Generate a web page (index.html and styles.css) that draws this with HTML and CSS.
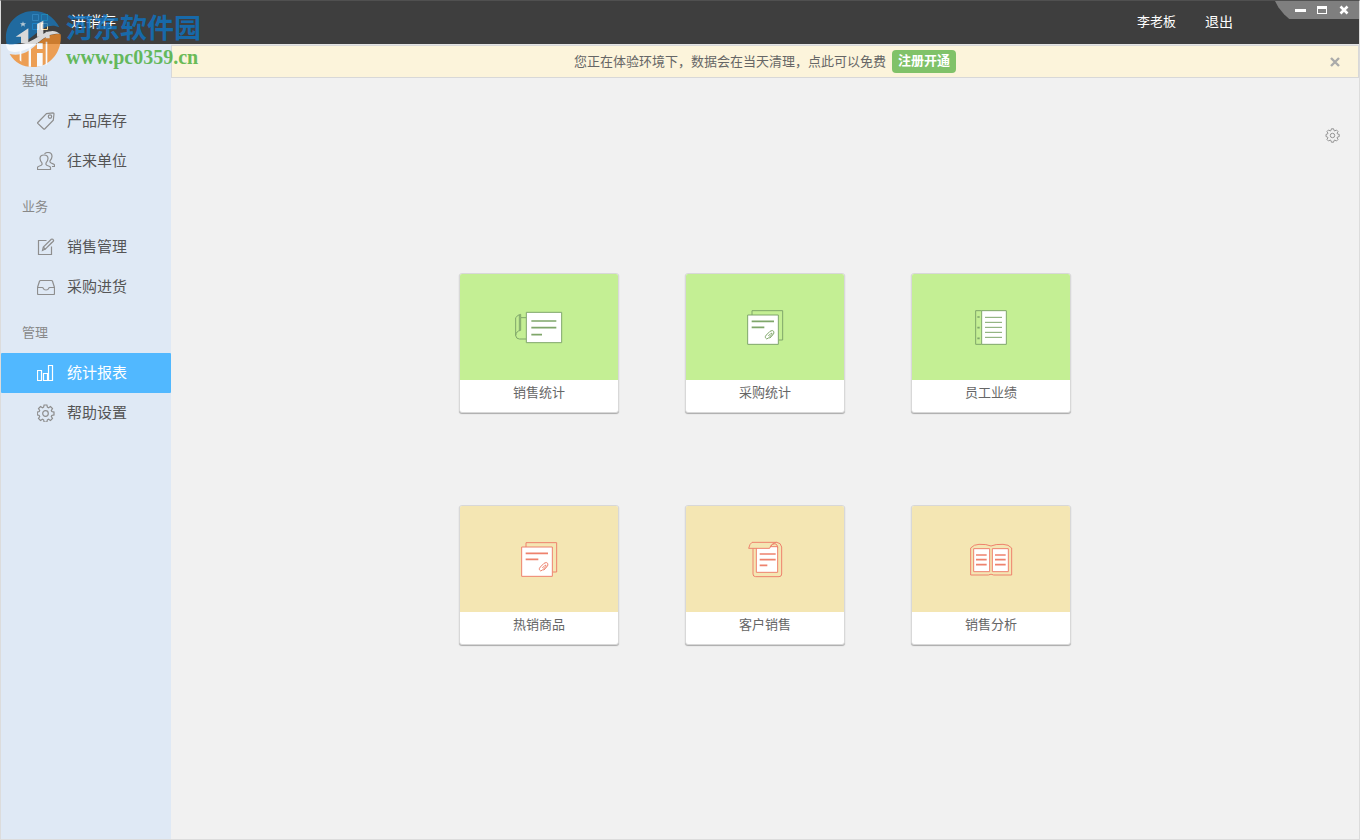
FILE: index.html
```html
<!DOCTYPE html>
<html lang="zh-CN">
<head>
<meta charset="utf-8">
<title>进销存</title>
<link rel="stylesheet" href="styles.css">
</head>
<body>
<div class="window">
  <header class="topbar">
    <svg class="app-icon" viewBox="0 0 16 16" width="16" height="16" fill="none" aria-hidden="true">
      <path d="M.5.5h6v6h-6z" stroke="#8fb4cc"/><path d="M9.500.5h6v6h-6z" stroke="#3ac0b0"/>
      <path d="M.5 9.500h6v6h-6z" stroke="#2fb3ff"/><path d="M9.500 9.500h6v6h-6z" stroke="#ffd98e"/>
    </svg>
    <h1 class="app-title">进销存</h1>
    <a class="user" href="#">李老板</a>
    <a class="logout" href="#">退出</a>
    <div class="win-controls">
      <button type="button" aria-label="最小化"><svg viewBox="0 0 12 12" width="12" height="12"><path d="M1 5h11v3H1z" fill="#fff"/></svg></button>
      <button type="button" aria-label="最大化"><svg viewBox="0 0 12 12" width="12" height="12"><path d="M1 2h10v8H1zM2 5v4h8V5z" fill="#fff" fill-rule="evenodd"/></svg></button>
      <button type="button" aria-label="关闭"><svg viewBox="0 0 12 12" width="12" height="12"><path d="M2.500 2.500l7 7M9.500 2.500l-7 7" stroke="#fff" stroke-width="2.600"/></svg></button>
    </div>
  </header>

  <div class="body">
    <nav class="sidebar">
      <h2 class="group">基础</h2>
      <a class="item" href="#">
        <svg viewBox="0 0 18 18" width="18" height="18"><path d="M.8 10.500 9.500 1.600 16 .8q1 0 1 1l-.7 6.400-8.600 8.800q-.5.400-1 0L.8 11.400q-.4-.5 0-.9z"/><circle cx="13" cy="4.600" r="1.700"/></svg>
        产品库存</a>
      <a class="item" href="#">
        <svg viewBox="0 0 18 18" width="18" height="18"><path d="M.5 17.500v-2q0-1 2-1.500t2.500-1.500V11Q3 8.500 3 6.500 3 3 7 3t4 3.500q0 2-2 4.500v1.500q.5 1 2.500 1.500t2 1.500v2zM7.500 1.700Q9 .5 11 .5q4 0 4 4 0 2-2 4.300V10q.5 1 2.500 1.600t2 1.400v1.500H15"/></svg>
        往来单位</a>
      <h2 class="group">业务</h2>
      <a class="item" href="#">
        <svg viewBox="0 0 18 18" width="18" height="18"><path d="M9.500 2.500H1.500v14h13V8.500M5.500 12.500l.8-3.500 8-7.700q.7-.6 1.400 0l.6.600q.6.700 0 1.400l-8 7.800zM6.300 9l2 2.100 6.500-6.700"/></svg>
        销售管理</a>
      <a class="item" href="#">
        <svg viewBox="0 0 18 18" width="18" height="18"><path d="M3.500 2.500h11q.8 0 1 .8l2 6.200v6q0 1-1 1h-15q-1 0-1-1v-6l2-6.200q.2-.8 1-.8zM.5 9.500h4.800q.8 0 1 .8.500 1.700 2.700 1.700t2.700-1.700q.2-.8 1-.8h4.800"/></svg>
        采购进货</a>
      <h2 class="group">管理</h2>
      <a class="item active" href="#" aria-current="page">
        <svg viewBox="0 0 18 18" width="18" height="18"><path d="M.5 6.500h4v10h-4zM6.500 9.500h4v7h-4zM11.500 1.500h4v15h-4z"/></svg>
        统计报表</a>
      <a class="item" href="#">
        <svg viewBox="0 0 18 18" width="18" height="18"><path id="gear" d="M6.600 3.200 7.100 1h2.800l.5 2.200 1.100.5 2-1.200 2 2-1.200 2 .5 1.100 2.200.5v2.800l-2.200.5-.5 1.100 1.200 2-2 2-2-1.200-1.100.5-.5 2.200H7.100l-.5-2.200-1.100-.5-2 1.200-2-2 1.200-2-.5-1.100L.3 10.900V8.100l1.900-.5.5-1.100-1.200-2 2-2 2 1.200z"/><circle cx="8.500" cy="9.500" r="2.800"/></svg>
        帮助设置</a>
    </nav>

    <div class="content">
      <div class="notice">
        <span>您正在体验环境下，数据会在当天清理，点此可以免费</span>
        <a class="register" href="#">注册开通</a>
        <button class="dismiss" type="button" aria-label="关闭提示"><svg viewBox="0 0 10 10" width="10" height="10"><path d="M1 1l8 8M9 1l-8 8" stroke="#aaa" stroke-width="2.400"/></svg></button>
      </div>
      <main class="main">
        <button class="settings" type="button" aria-label="设置">
          <svg viewBox="-1 0 19 19" width="15" height="15"><use href="#gear"/><circle cx="8.500" cy="9.500" r="2.800"/></svg>
        </button>
        <div class="cards">
          <a class="card green" href="#">
            <span class="art"><svg viewBox="195 135 150 105" width="50" height="35">
              <path d="M232 158h-17v-10q-8 1-15 10v54q2 10 11 10h21M215 158v38q-14 2-15 16M211 150v46"/>
              <path class="paper" d="M232 142h106v91H232z"/>
              <path class="line" d="M247 168h75M247 188h75M247 209h32"/></svg></span>
            <span class="name">销售统计</span></a>
          <a class="card green" href="#">
            <span class="art"><svg viewBox="207 132 120 111" width="40" height="37">
              <path d="M228 150v-13h92v88h-12"/>
              <path class="paper" d="M215 150h92v88h-92z"/>
              <path class="line" d="M227 169h67M227 187h38"/>
              <path d="M277 213l8-8q4-2 3 3l-10 11q-7 6-10-1-1-4 3-8l11-11q8-5 11 0 3 5-3 11l-9 10"/></svg></span>
            <span class="name">采购统计</span></a>
          <a class="card green" href="#">
            <span class="art"><svg viewBox="207 132 120 111" width="40" height="37">
              <path d="M239 137h-18v101h18"/>
              <path class="paper" d="M239 137h74v101h-74z"/>
              <path d="M249 157h51M249 172h51M249 187h51M249 202h51M249 217h51"/>
              <path class="line" d="M226 156h7M226 188h7M226 220h7"/></svg></span>
            <span class="name">员工业绩</span></a>
          <a class="card sand" href="#">
            <span class="art"><svg viewBox="207 132 120 111" width="40" height="37">
              <path d="M228 150v-13h92v88h-12"/>
              <path class="paper" d="M215 150h92v88h-92z"/>
              <path class="line" d="M227 169h67M227 187h38"/>
              <path d="M277 213l8-8q4-2 3 3l-10 11q-7 6-10-1-1-4 3-8l11-11q8-5 11 0 3 5-3 11l-9 10"/></svg></span>
            <span class="name">热销商品</span></a>
          <a class="card sand" href="#">
            <span class="art"><svg viewBox="60 33 120 111" width="40" height="37">
              <path d="M84 55v77q0 8 8 8h70q8 0 8-8V51q-2-13-15-14"/>
              <path class="paper" d="M94 50h64v77H94z"/>
              <path class="flap" d="M155 37H81q-7 4-10 18h63q5-16 21-18z"/>
              <path d="M136 50q6-9 14-9 8 2 8 12"/>
              <path class="line" d="M104 72h48M104 89h48M104 106h23"/></svg></span>
            <span class="name">客户销售</span></a>
          <a class="card sand" href="#">
            <span class="art"><svg viewBox="60 33 129 105" width="43" height="35">
              <path d="M62 51q10-11 25-11 23-1 36 5 13-6 36-5 17 0 26 11v81h-54q-8-5-16 0H62z"/>
              <path class="paper" d="M71 53h48v69H71zM127 53h48v69h-48z"/>
              <path class="line" d="M78 72h32M78 86h32M78 101h32M135 72h32M135 86h32M135 101h32"/></svg></span>
            <span class="name">销售分析</span></a>
        </div>
      </main>
    </div>
  </div>

  <div class="watermark">
    <svg viewBox="0 0 168 168" width="56" height="56" aria-hidden="true">
      <path fill="#1976b8" d="M5 100C-8 42 37 0 85 0q52 0 78 49c-24-12-48 0-71 19-27 24-52 34-87 32z"/>
      <path fill="#f08c2c" d="M167 70c5 52-32 98-83 98q-47 0-70-39c30 7 54-4 80-28 24-22 46-36 73-31z"/>
      <path fill="#fff" d="M3 98c26 10 62 2 94-19 29-20 51-26 68-10-25-4-42 8-62 23C67 119 28 130 10 118Q4 111 3 98z"/>
      <path fill="#fff" d="M32 77l38-25v45H48V77zM96 39l19-10v48H96zM122 62h12v20h-12zM44 116h5v36l-5-4zM71 112h7v55h-7zM96 96h17v18h-17zM96 126h17v38l-17 3zM122 92h5v68l-5 3z"/>
      <path fill="#d7edfa" d="M54 31l2 6h7l-5 4 2 6-6-4-6 4 2-6-5-4h7z"/>
    </svg>
    <div class="mark-text"><span class="mark-name">河东软件园</span><span class="mark-url">www.pc0359.cn</span></div>
  </div>
</div>
</body>
</html>
```
FILE: styles.css
```css
* { box-sizing: border-box; }
body {
  margin: 0;
  font: 13px/20px "Liberation Sans", "Noto Sans CJK SC", sans-serif;
  color: #666;
}
a { color: inherit; text-decoration: none; }
button { border: 0; padding: 0; background: none; display: flex; cursor: pointer; }
h1, h2 { margin: 0; font-weight: normal; }
svg { display: block; flex: none; fill: none; }

.window {
  position: relative;
  display: flex;
  flex-direction: column;
  min-height: 100vh;
  border: 1px solid #dcdcdc;
  border-top-color: #505050;
  background: #f1f1f1;
}
.topbar {
  display: flex;
  align-items: center;
  height: 43px;
  padding: 0 0 2px 31px;
  background: #3e3e3e;
  color: #fff;
}
.app-title { flex: 1; margin-left: 23px; font-size: 15px; }
.user { margin-right: 29px; }
.logout { margin-right: 42px; font-size: 14px; }
.win-controls {
  display: flex;
  align-self: flex-start;
  justify-content: flex-end;
  gap: 10px;
  width: 84px;
  height: 18px;
  padding: 3px 9px 0 0;
  background: #7f7f7f;
  clip-path: polygon(0 0, 100% 0, 100% 100%, 17% 100%, 11% 75%, 4% 35%);
}

.body { flex: 1; display: flex; }
.sidebar { width: 170px; flex: none; padding-top: 11px; background: #dfe9f5; }
.group { padding: 6px 0 0 21px; font-size: 13px; line-height: 40px; color: #888; }
.item {
  display: flex;
  align-items: center;
  gap: 12px;
  height: 40px;
  padding-left: 36px;
  font-size: 15px;
  color: #555;
}
.item svg, .settings svg { stroke: #8e8e8e; stroke-width: 1.2; }
.item.active { background: #51b8ff; border-radius: 1px; color: #fff; }
.item.active svg { stroke: #fff; }

.content { flex: 1; display: flex; flex-direction: column; border-top: 1px solid #e4e4e4; }
.notice {
  position: relative;
  display: flex;
  align-items: center;
  justify-content: center;
  gap: 6px;
  height: 33px;
  border: 1px solid #d8d8d8;
  background: #fcf4db;
}
.register {
  padding: 1px 6px 2px;
  border-radius: 4px;
  background: #80c269;
  color: #fff;
  font-weight: bold;
}
.dismiss { position: absolute; right: 18px; }
.main { position: relative; flex: 1; display: grid; place-content: center; }
.settings { position: absolute; top: 50px; right: 19px; }

.cards { display: grid; grid-template-columns: repeat(3, 160px); gap: 92px 66px; }
.card {
  overflow: hidden;
  border: 1px solid #d8d8d8;
  border-radius: 3px;
  background: #fff;
  box-shadow: 0 1px 1px #aaa;
  text-align: center;
}
.art { display: flex; align-items: center; justify-content: center; height: 106px; padding-top: 2px; }
.art svg { stroke-width: 3; stroke: currentColor; }
.art .paper { fill: #fff; }
.art .flap { fill: #f4e6b3; }
.art .line { stroke-width: 5; }
.green .art { background: #c4ef94; color: #7fa66a; }
.sand .art { background: #f4e6b3; color: #ee826d; }
.name { display: block; padding: 3px 0 9px; }

.watermark {
  position: absolute;
  top: 10px;
  left: 4px;
  display: flex;
  gap: 5px;
  opacity: .8;
  pointer-events: none;
}
.mark-text { display: flex; flex-direction: column; font-weight: bold; }
.mark-name { font-size: 27px; line-height: 36px; color: #0e74c4; }
.mark-url { font: bold 20px/20px "Liberation Serif", serif; color: #46ad36; }
```
